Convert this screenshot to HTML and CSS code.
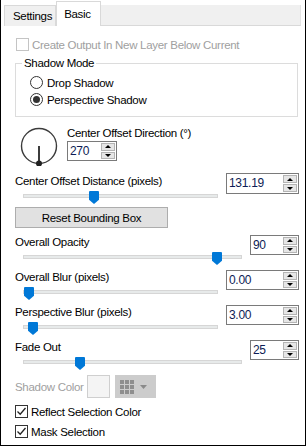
FILE: index.html
```html
<!DOCTYPE html>
<html lang="en">
<head>
    <meta charset="UTF-8">
    <title>Perspective Shadow</title>
    <link rel="stylesheet" href="styles.css">
</head>
<body>
    <div class="window">
        <div class="tabs">
            <div class="tab">Settings</div>
            <div class="tab active">Basic</div>
            <div class="tab-fill"></div>
        </div>

        <div class="panel">
            <div class="check disabled">
                <span class="box"></span>
                <span>Create Output In New Layer Below Current</span>
            </div>

            <fieldset class="group">
                <legend>Shadow Mode</legend>
                <div class="radio"><span class="dot"></span>Drop Shadow</div>
                <div class="radio"><span class="dot on"></span>Perspective Shadow</div>
            </fieldset>

            <div class="dial-row">
                <svg class="dial" width="40" height="40" viewBox="0 0 40 40">
                    <circle cx="20" cy="20" r="17.5" fill="none" stroke="#3c3c3c" stroke-width="1.4"/>
                    <line x1="20" y1="20" x2="20" y2="37" stroke="#3c3c3c" stroke-width="2"/>
                    <circle cx="20" cy="37.5" r="3" fill="#222"/>
                </svg>
                <div class="dial-side">
                    <div class="label">Center Offset Direction (°)</div>
                    <div class="spin small">
                        <span class="val">270</span>
                        <span class="btns"><span class="up"></span><span class="down"></span></span>
                    </div>
                </div>
            </div>

            <div class="slider short first">
                <div class="label">Center Offset Distance (pixels)</div>
                <div class="track"><span class="thumb" style="left:65px"></span></div>
                <div class="spin">
                    <span class="val">131.19</span>
                    <span class="btns"><span class="up"></span><span class="down"></span></span>
                </div>
            </div>

            <button class="reset">Reset Bounding Box</button>

            <div class="slider long after-btn">
                <div class="label">Overall Opacity</div>
                <div class="track"><span class="thumb" style="left:188px"></span></div>
                <div class="spin">
                    <span class="val">90</span>
                    <span class="btns"><span class="up"></span><span class="down"></span></span>
                </div>
            </div>

            <div class="slider short">
                <div class="label">Overall Blur (pixels)</div>
                <div class="track"><span class="thumb" style="left:0px"></span></div>
                <div class="spin">
                    <span class="val">0.00</span>
                    <span class="btns"><span class="up"></span><span class="down"></span></span>
                </div>
            </div>

            <div class="slider short">
                <div class="label">Perspective Blur (pixels)</div>
                <div class="track"><span class="thumb" style="left:4px"></span></div>
                <div class="spin">
                    <span class="val">3.00</span>
                    <span class="btns"><span class="up"></span><span class="down"></span></span>
                </div>
            </div>

            <div class="slider long">
                <div class="label">Fade Out</div>
                <div class="track"><span class="thumb" style="left:51px"></span></div>
                <div class="spin">
                    <span class="val">25</span>
                    <span class="btns"><span class="up"></span><span class="down"></span></span>
                </div>
            </div>

            <div class="color-row">
                <span class="color-label">Shadow Color</span>
                <span class="swatch"></span>
                <span class="palette">
                    <svg width="14" height="14" viewBox="0 0 14 14">
                        <g fill="#8e8e8e">
                            <rect x="0" y="0" width="4" height="4"/><rect x="5" y="0" width="4" height="4"/><rect x="10" y="0" width="4" height="4"/>
                            <rect x="0" y="5" width="4" height="4"/><rect x="5" y="5" width="4" height="4"/><rect x="10" y="5" width="4" height="4"/>
                            <rect x="0" y="10" width="4" height="4"/><rect x="5" y="10" width="4" height="4"/><rect x="10" y="10" width="4" height="4"/>
                        </g>
                    </svg>
                    <svg class="caret" width="7" height="4" viewBox="0 0 7 4"><polygon points="0,0 7,0 3.5,4" fill="#8a8a8a"/></svg>
                </span>
            </div>

            <div class="check on first-check">
                <span class="box">
                    <svg width="11" height="11" viewBox="0 0 11 11"><polyline points="1.5,5.5 4.2,8.2 9.5,2" fill="none" stroke="#222" stroke-width="1.3"/></svg>
                </span>
                <span>Reflect Selection Color</span>
            </div>
            <div class="check on">
                <span class="box">
                    <svg width="11" height="11" viewBox="0 0 11 11"><polyline points="1.5,5.5 4.2,8.2 9.5,2" fill="none" stroke="#222" stroke-width="1.3"/></svg>
                </span>
                <span>Mask Selection</span>
            </div>
        </div>
    </div>
</body>
</html>
```

FILE: styles.css
```css
body { margin: 0; background: #fff; font-family: 'Liberation Sans', Arial, sans-serif; font-size: 11.5px; letter-spacing: -0.3px; color: #000; }
.window { width: 306px; height: 446px; box-sizing: border-box; border: 1px solid #000; border-top: none; background: #fff; overflow: hidden; }

.tabs { display: flex; align-items: flex-end; height: 26px; padding-left: 3px; }
.tab { height: 21px; box-sizing: border-box; padding: 0 3px 0 8px; line-height: 21px; background: #f0f0f0; border: 1px solid #d9d9d9; border-bottom: none; white-space: nowrap; }
.tab.active { height: 25px; line-height: 24px; padding: 0 9px 0 7px; background: #fff; }
.tab-fill { flex: 1; height: 21px; margin-right: 4px; background: #f0f0f0; border-bottom: 1px solid #d9d9d9; border-right: 1px solid #e4e4e4; box-sizing: border-box; }

.panel { padding: 0 6px 0 14px; }
.label { line-height: 16px; height: 16px; white-space: nowrap; }

.check { display: flex; align-items: center; gap: 3px; height: 17px; white-space: nowrap; }
.check .box { width: 13px; height: 13px; box-sizing: border-box; border: 1px solid #333; background: #fff; display: flex; align-items: center; justify-content: center; }
.check.disabled { margin-top: 10px; margin-left: 1px; color: #a0a0a0; }
.check.disabled .box { border-color: #c4c4c4; }
.first-check { margin-top: 5px; }
.check.on + .check.on { margin-top: 3px; }

.group { margin: 3px 1px 0 0; padding: 5px 6px 10px 6px; border: 1px solid #dcdcdc; }
.group legend { padding: 0 2px; line-height: 15px; }
.radio { display: flex; align-items: center; gap: 4px; height: 13px; margin-left: 8px; }
.radio + .radio { margin-top: 4px; }
.radio .dot { width: 13px; height: 13px; box-sizing: border-box; border: 1px solid #333; border-radius: 50%; display: flex; align-items: center; justify-content: center; }
.radio .dot.on::after { content: ''; width: 7px; height: 7px; border-radius: 50%; background: #333; }

.dial-row { display: flex; margin-top: 8px; height: 36px; }
.dial { margin: 1px 0 0 4px; }
.dial-side { margin-left: 8px; }

.spin { display: flex; height: 21px; box-sizing: border-box; border: 1px solid #7a7a7a; background: #fff; }
.spin.small { width: 50px; height: 20px; }
.spin .val { flex: 1; padding-left: 2px; line-height: 18px; font-size: 12px; color: #0d1c55; }
.spin .btns { width: 15px; display: flex; flex-direction: column; gap: 1px; padding: 1px 1px 1px 0; box-sizing: border-box; }
.spin .btns span { flex: 1; background: #e6e6e6; border: 1px solid #b4b4b4; display: flex; align-items: center; justify-content: center; }
.spin .btns .up::after { content: ''; border-left: 3px solid transparent; border-right: 3px solid transparent; border-bottom: 3px solid #000; }
.spin .btns .down::after { content: ''; border-left: 3px solid transparent; border-right: 3px solid transparent; border-top: 3px solid #000; }

.slider { display: grid; grid-template-rows: 16px 14px; column-gap: 8px; margin-top: 5px; }
.slider.short { grid-template-columns: 1fr 73px; }
.slider.long { grid-template-columns: 1fr 49px; }
.slider.first { margin-top: 12px; }
.slider.after-btn { margin-top: 6px; }
.slider .label { grid-column: 1; grid-row: 1; }
.slider .spin { grid-column: 2; grid-row: 1 / 3; align-self: start; margin-top: 1px; height: 20px; }
.slider.first .spin { height: 21px; margin-top: 0; }
.track { grid-column: 1; grid-row: 2; position: relative; margin: 5px 0 0 8px; height: 4px; background: #e7eaea; border: 1px solid #d6d6d6; box-sizing: border-box; }
.thumb { position: absolute; top: -4px; width: 10px; height: 13px; background: #0078d7; clip-path: polygon(0 0, 100% 0, 100% 68%, 50% 100%, 0 68%); border-radius: 1px; }

.reset { display: block; margin-top: 4px; width: 153px; height: 21px; padding: 0; font: inherit; letter-spacing: inherit; color: #000; background: #e1e1e1; border: 1px solid #adadad; }

.color-row { display: flex; align-items: center; margin-top: 6px; height: 23px; }
.color-label { color: #a0a0a0; width: 72px; white-space: nowrap; }
.swatch { width: 23px; height: 23px; box-sizing: border-box; border: 1px solid #cfcfcf; background: #f4f4f4; }
.palette { margin-left: 5px; width: 41px; height: 23px; background: #cccccc; display: flex; align-items: center; gap: 6px; padding-left: 5px; box-sizing: border-box; }
```
